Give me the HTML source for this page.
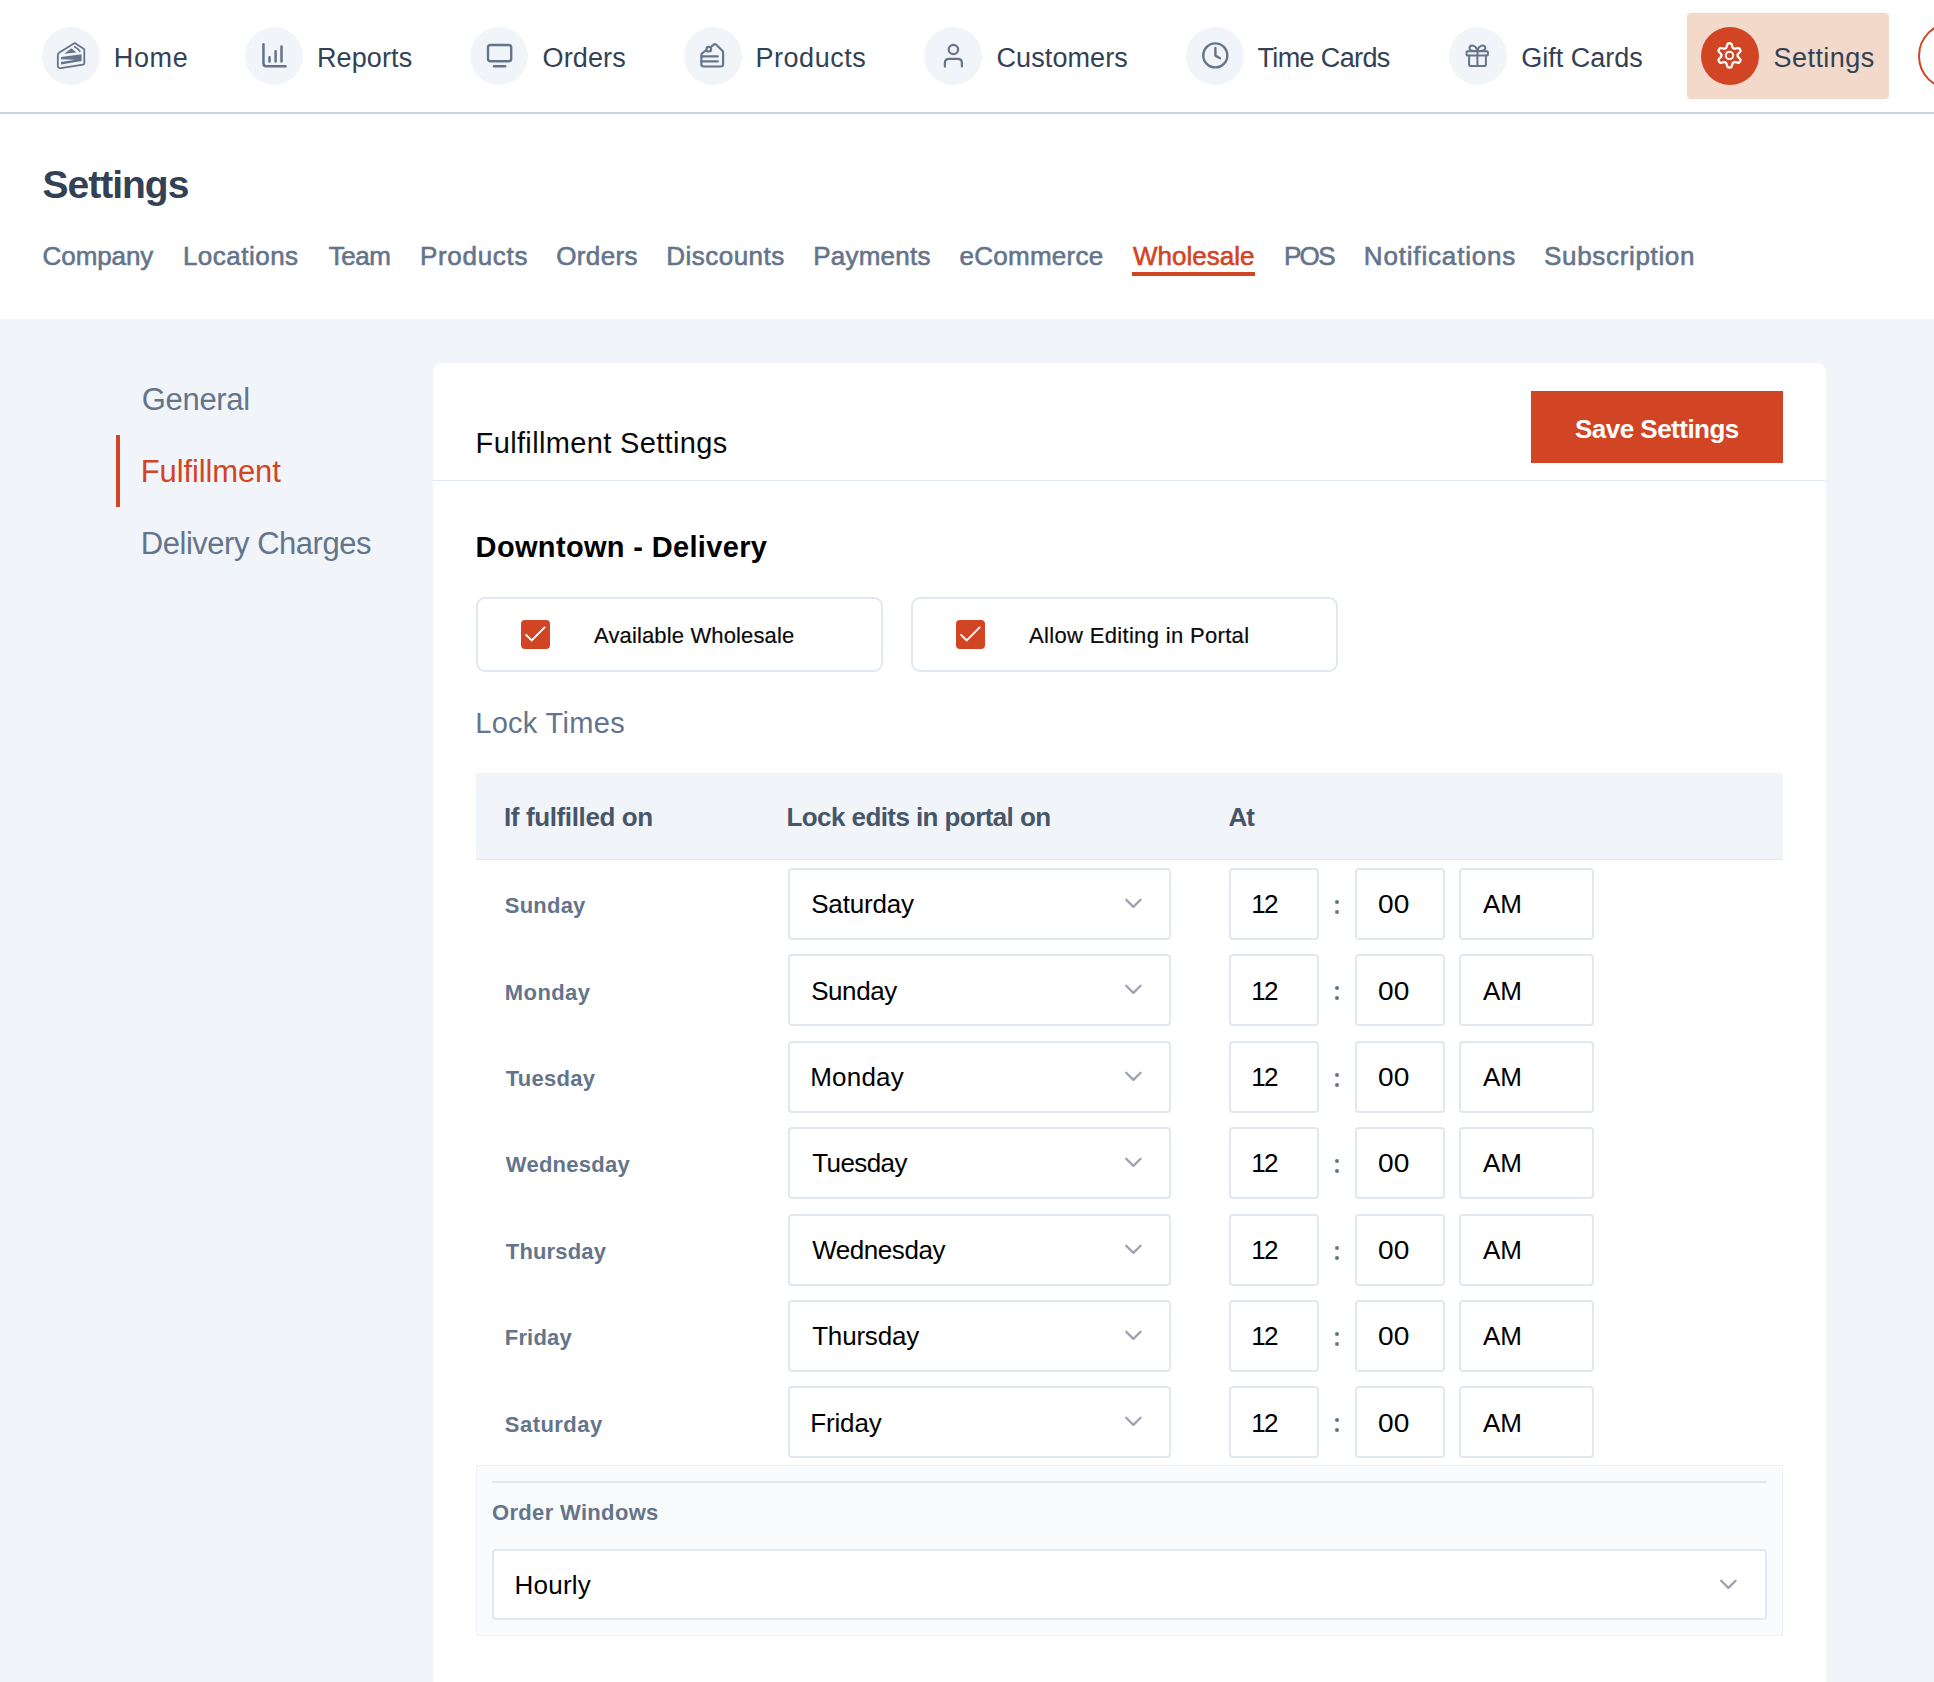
<!DOCTYPE html>
<html lang="en"><head><meta charset="utf-8"><title>Settings - Wholesale Fulfillment</title>
<style>
*{box-sizing:border-box;margin:0;padding:0}
html,body{width:1934px;height:1682px;overflow:hidden;background:#fff;font-family:"Liberation Sans", sans-serif}
.t{position:absolute;line-height:1;white-space:nowrap}
.abs{position:absolute}
.circ{position:absolute;width:58px;height:58px;border-radius:50%;background:#f1f5f9}
.circ svg{position:absolute;left:0;top:0}
.sel{position:absolute;background:#fff;border:2px solid #e2e8f0;border-radius:4px}
</style></head><body>
<nav class="topnav">
<div class="circ" style="left:42px;top:27px"><svg width="58" height="58" viewBox="0 0 58 58"><path d="M32.8 15.9 L42.3 22.2 V36.3 Q42.3 37.4 41.1 37.6 L18.8 41.1 Q15.8 41.5 15.8 38.6 V28.6 Q15.8 26.6 17.3 25.6 Z" stroke="#64748b" fill="none" stroke-linecap="round" stroke-linejoin="round" stroke-width="1.8"/><path d="M22.2 26.7 L29.4 21.3 L34.4 25.4 Z" fill="#64748b"/><path d="M32.6 19.8 Q35.8 21.2 37.9 24.3" stroke="#64748b" fill="none" stroke-linecap="round" stroke-linejoin="round" stroke-width="1.6"/><path d="M19 29.9 L39.6 27.2 L39.6 34 L19 37.6 L19 35.1 L33.2 32.7 L19 32.3 Z" fill="#64748b"/></svg></div>
<div class="t" style="left:113.80px;top:45px;font-size:27px;color:#334155;font-weight:normal;letter-spacing:0.63px;">Home</div>
<div class="circ" style="left:245px;top:27px"><svg width="58" height="58" viewBox="0 0 58 58"><path d="M18.45 17.2 V36.6 Q18.45 39.3 21.2 39.3 H40.6" stroke="#64748b" fill="none" stroke-linecap="round" stroke-linejoin="round" stroke-width="2.5"/><path d="M24.5 30.3 V34.6 M30.6 24.2 V34.6 M36.5 19.4 V34.6" stroke="#64748b" fill="none" stroke-linecap="round" stroke-linejoin="round" stroke-width="2.5"/></svg></div>
<div class="t" style="left:317.00px;top:45px;font-size:27px;color:#334155;font-weight:normal;letter-spacing:0.10px;">Reports</div>
<div class="circ" style="left:470px;top:27px"><svg width="58" height="58" viewBox="0 0 58 58"><rect x="18" y="18" width="23.2" height="16.3" rx="2.6" stroke="#64748b" fill="none" stroke-linecap="round" stroke-linejoin="round" stroke-width="2.4"/><path d="M24 39.3 H35.2" stroke="#64748b" fill="none" stroke-linecap="round" stroke-linejoin="round" stroke-width="2.4"/></svg></div>
<div class="t" style="left:542.50px;top:45px;font-size:27px;color:#334155;font-weight:normal;letter-spacing:0.14px;">Orders</div>
<div class="circ" style="left:684px;top:27px"><svg width="58" height="58" viewBox="0 0 58 58"><path d="M21.9 23.3 L17.9 26.5 Q17.4 27 17.4 27.8 V37.3 Q17.4 39.5 19.6 39.5 H37 Q39.1 39.5 39.1 37.3 V25.3 Q39.1 24.6 38.6 24 L32 17.5 Q31 16.6 30 17.4 L27.5 19.5" stroke="#64748b" fill="none" stroke-linecap="round" stroke-linejoin="round" stroke-width="2.2"/><circle cx="24.8" cy="22.2" r="2.3" stroke="#64748b" fill="none" stroke-linecap="round" stroke-linejoin="round" stroke-width="2.2"/><path d="M17.6 29.4 H33.8 M17.6 34.4 H33.8" stroke="#64748b" fill="none" stroke-linecap="round" stroke-linejoin="round" stroke-width="2.2"/></svg></div>
<div class="t" style="left:755.60px;top:45px;font-size:27px;color:#334155;font-weight:normal;letter-spacing:0.50px;">Products</div>
<div class="circ" style="left:924px;top:27px"><svg width="58" height="58" viewBox="0 0 58 58"><circle cx="29.4" cy="22.5" r="4.7" stroke="#64748b" fill="none" stroke-linecap="round" stroke-linejoin="round" stroke-width="2.2"/><path d="M20.9 39.6 V36 Q20.9 31.8 25.1 31.8 H33.7 Q37.9 31.8 37.9 36 V39.6" stroke="#64748b" fill="none" stroke-linecap="round" stroke-linejoin="round" stroke-width="2.2"/></svg></div>
<div class="t" style="left:996.50px;top:45px;font-size:27px;color:#334155;font-weight:normal;letter-spacing:0.09px;">Customers</div>
<div class="circ" style="left:1186px;top:27px"><svg width="58" height="58" viewBox="0 0 58 58"><circle cx="29.3" cy="28.4" r="12" stroke="#64748b" fill="none" stroke-linecap="round" stroke-linejoin="round" stroke-width="2.4"/><path d="M29.4 20.9 V28.6 L34 31.2" stroke="#64748b" fill="none" stroke-linecap="round" stroke-linejoin="round" stroke-width="2.4"/></svg></div>
<div class="t" style="left:1257.50px;top:45px;font-size:27px;color:#334155;font-weight:normal;letter-spacing:-0.63px;">Time Cards</div>
<div class="circ" style="left:1449px;top:27px"><svg width="58" height="58" viewBox="0 0 58 58"><rect x="17.6" y="24.3" width="21.3" height="4.3" rx="0.8" stroke="#64748b" fill="none" stroke-linecap="round" stroke-linejoin="round" stroke-width="2"/><path d="M20.1 28.6 V37.2 Q20.1 39 21.9 39 H35.1 Q36.9 39 36.9 37.2 V28.6 M28.4 22 V39" stroke="#64748b" fill="none" stroke-linecap="round" stroke-linejoin="round" stroke-width="2"/><path d="M28.4 23.6 Q27 19 23.6 18.4 Q20.6 18.2 20.4 21 Q20.5 23.4 23.5 23.8 Q26 24.2 28.4 23.6 Q30.8 24.2 33.3 23.8 Q36.3 23.4 36.4 21 Q36.2 18.2 33.2 18.4 Q29.8 19 28.4 23.6" stroke="#64748b" fill="none" stroke-linecap="round" stroke-linejoin="round" stroke-width="2"/></svg></div>
<div class="t" style="left:1521.30px;top:45px;font-size:27px;color:#334155;font-weight:normal;">Gift Cards</div>
<div class="abs" style="left:1687px;top:13px;width:202px;height:86px;background:#f3d9c9;border-radius:4px"></div>
<div class="circ" style="left:1701px;top:27px;background:#d14424"><svg width="58" height="58" viewBox="0 0 58 58"><path d="M36.60 28.40 L36.60 28.54 L36.60 28.68 L36.62 28.83 L36.64 28.97 L36.68 29.12 L36.74 29.27 L36.82 29.42 L36.92 29.58 L37.04 29.75 L37.18 29.93 L37.35 30.12 L37.53 30.32 L37.72 30.53 L37.93 30.75 L38.15 30.99 L38.38 31.23 L38.61 31.49 L38.83 31.76 L39.05 32.03 L39.25 32.31 L39.43 32.60 L39.53 32.86 L39.55 33.09 L39.51 33.30 L39.44 33.50 L39.36 33.70 L39.27 33.89 L39.18 34.08 L39.08 34.26 L38.97 34.45 L38.87 34.63 L38.76 34.81 L38.64 34.98 L38.52 35.16 L38.39 35.33 L38.25 35.48 L38.08 35.62 L37.88 35.73 L37.60 35.77 L37.27 35.76 L36.92 35.72 L36.57 35.67 L36.23 35.61 L35.89 35.54 L35.57 35.47 L35.25 35.39 L34.96 35.32 L34.68 35.26 L34.41 35.20 L34.17 35.15 L33.94 35.12 L33.73 35.10 L33.54 35.09 L33.37 35.10 L33.21 35.13 L33.06 35.17 L32.93 35.22 L32.80 35.28 L32.67 35.34 L32.55 35.41 L32.43 35.49 L32.31 35.56 L32.19 35.64 L32.08 35.74 L31.97 35.84 L31.87 35.97 L31.78 36.12 L31.69 36.28 L31.60 36.47 L31.52 36.69 L31.43 36.92 L31.35 37.18 L31.27 37.45 L31.18 37.75 L31.09 38.05 L30.99 38.37 L30.88 38.70 L30.76 39.02 L30.63 39.35 L30.49 39.67 L30.33 39.97 L30.16 40.18 L29.96 40.31 L29.76 40.38 L29.55 40.43 L29.34 40.46 L29.13 40.47 L28.92 40.49 L28.71 40.49 L28.50 40.49 L28.29 40.49 L28.08 40.49 L27.87 40.47 L27.66 40.46 L27.45 40.43 L27.24 40.38 L27.04 40.31 L26.84 40.18 L26.67 39.97 L26.51 39.67 L26.37 39.35 L26.24 39.02 L26.12 38.70 L26.01 38.37 L25.91 38.05 L25.82 37.75 L25.73 37.45 L25.65 37.18 L25.57 36.92 L25.48 36.69 L25.40 36.47 L25.31 36.28 L25.22 36.12 L25.13 35.97 L25.03 35.84 L24.92 35.74 L24.81 35.64 L24.69 35.56 L24.57 35.49 L24.45 35.41 L24.33 35.34 L24.20 35.28 L24.07 35.22 L23.94 35.17 L23.79 35.13 L23.63 35.10 L23.46 35.09 L23.27 35.10 L23.06 35.12 L22.83 35.15 L22.59 35.20 L22.32 35.26 L22.04 35.32 L21.75 35.39 L21.43 35.47 L21.11 35.54 L20.77 35.61 L20.43 35.67 L20.08 35.72 L19.73 35.76 L19.40 35.77 L19.12 35.73 L18.92 35.62 L18.75 35.48 L18.61 35.33 L18.48 35.16 L18.36 34.98 L18.24 34.81 L18.13 34.63 L18.03 34.45 L17.92 34.26 L17.82 34.08 L17.73 33.89 L17.64 33.70 L17.56 33.50 L17.49 33.30 L17.45 33.09 L17.47 32.86 L17.57 32.60 L17.75 32.31 L17.95 32.03 L18.17 31.76 L18.39 31.49 L18.62 31.23 L18.85 30.99 L19.07 30.75 L19.28 30.53 L19.47 30.32 L19.65 30.12 L19.82 29.93 L19.96 29.75 L20.08 29.58 L20.18 29.42 L20.26 29.27 L20.32 29.12 L20.36 28.97 L20.38 28.83 L20.40 28.68 L20.40 28.54 L20.40 28.40 L20.40 28.26 L20.40 28.12 L20.38 27.97 L20.36 27.83 L20.32 27.68 L20.26 27.53 L20.18 27.38 L20.08 27.22 L19.96 27.05 L19.82 26.87 L19.65 26.68 L19.47 26.48 L19.28 26.27 L19.07 26.05 L18.85 25.81 L18.62 25.57 L18.39 25.31 L18.17 25.04 L17.95 24.77 L17.75 24.49 L17.57 24.20 L17.47 23.94 L17.45 23.71 L17.49 23.50 L17.56 23.30 L17.64 23.10 L17.73 22.91 L17.82 22.72 L17.92 22.54 L18.03 22.35 L18.13 22.17 L18.24 21.99 L18.36 21.82 L18.48 21.64 L18.61 21.47 L18.75 21.32 L18.92 21.18 L19.12 21.07 L19.40 21.03 L19.73 21.04 L20.08 21.08 L20.43 21.13 L20.77 21.19 L21.11 21.26 L21.43 21.33 L21.75 21.41 L22.04 21.48 L22.32 21.54 L22.59 21.60 L22.83 21.65 L23.06 21.68 L23.27 21.70 L23.46 21.71 L23.63 21.70 L23.79 21.67 L23.94 21.63 L24.07 21.58 L24.20 21.52 L24.33 21.46 L24.45 21.39 L24.57 21.31 L24.69 21.24 L24.81 21.16 L24.92 21.06 L25.03 20.96 L25.13 20.83 L25.22 20.68 L25.31 20.52 L25.40 20.33 L25.48 20.11 L25.57 19.88 L25.65 19.62 L25.73 19.35 L25.82 19.05 L25.91 18.75 L26.01 18.43 L26.12 18.10 L26.24 17.78 L26.37 17.45 L26.51 17.13 L26.67 16.83 L26.84 16.62 L27.04 16.49 L27.24 16.42 L27.45 16.37 L27.66 16.34 L27.87 16.33 L28.08 16.31 L28.29 16.31 L28.50 16.31 L28.71 16.31 L28.92 16.31 L29.13 16.33 L29.34 16.34 L29.55 16.37 L29.76 16.42 L29.96 16.49 L30.16 16.62 L30.33 16.83 L30.49 17.13 L30.63 17.45 L30.76 17.78 L30.88 18.10 L30.99 18.43 L31.09 18.75 L31.18 19.05 L31.27 19.35 L31.35 19.62 L31.43 19.88 L31.52 20.11 L31.60 20.33 L31.69 20.52 L31.78 20.68 L31.87 20.83 L31.97 20.96 L32.08 21.06 L32.19 21.16 L32.31 21.24 L32.43 21.31 L32.55 21.39 L32.67 21.46 L32.80 21.52 L32.93 21.58 L33.06 21.63 L33.21 21.67 L33.37 21.70 L33.54 21.71 L33.73 21.70 L33.94 21.68 L34.17 21.65 L34.41 21.60 L34.68 21.54 L34.96 21.48 L35.25 21.41 L35.57 21.33 L35.89 21.26 L36.23 21.19 L36.57 21.13 L36.92 21.08 L37.27 21.04 L37.60 21.03 L37.88 21.07 L38.08 21.18 L38.25 21.32 L38.39 21.47 L38.52 21.64 L38.64 21.82 L38.76 21.99 L38.87 22.17 L38.97 22.35 L39.08 22.54 L39.18 22.72 L39.27 22.91 L39.36 23.10 L39.44 23.30 L39.51 23.50 L39.55 23.71 L39.53 23.94 L39.43 24.20 L39.25 24.49 L39.05 24.77 L38.83 25.04 L38.61 25.31 L38.38 25.57 L38.15 25.81 L37.93 26.05 L37.72 26.27 L37.53 26.48 L37.35 26.68 L37.18 26.87 L37.04 27.05 L36.92 27.22 L36.82 27.38 L36.74 27.53 L36.68 27.68 L36.64 27.83 L36.62 27.97 L36.60 28.12 L36.60 28.26 Z" fill="none" stroke="#fff" stroke-width="2.3" stroke-linejoin="round"/><circle cx="28.5" cy="28.4" r="3.7" fill="none" stroke="#fff" stroke-width="1.9"/></svg></div>
<div class="t" style="left:1773.50px;top:45px;font-size:27px;color:#334155;font-weight:normal;letter-spacing:0.46px;">Settings</div>
<div class="abs" style="left:1918px;top:21.5px;width:68px;height:68px;border-radius:50%;border:2px solid #d14424"></div>
</nav>
<div class="abs" style="left:0;top:112px;width:1934px;height:2px;background:#cbd5e1"></div>
<div class="t" style="left:42.60px;top:165px;font-size:39px;color:#334155;font-weight:bold;letter-spacing:-1.01px;">Settings</div>
<div class="tabs">
<div class="t" style="left:42.60px;top:243px;font-size:26px;color:#64748b;font-weight:normal;letter-spacing:-0.10px;-webkit-text-stroke:0.6px currentColor;">Company</div>
<div class="t" style="left:182.90px;top:243px;font-size:26px;color:#64748b;font-weight:normal;letter-spacing:0.49px;-webkit-text-stroke:0.6px currentColor;">Locations</div>
<div class="t" style="left:328.80px;top:243px;font-size:26px;color:#64748b;font-weight:normal;letter-spacing:-0.47px;-webkit-text-stroke:0.6px currentColor;">Team</div>
<div class="t" style="left:419.90px;top:243px;font-size:26px;color:#64748b;font-weight:normal;letter-spacing:0.71px;-webkit-text-stroke:0.6px currentColor;">Products</div>
<div class="t" style="left:556.20px;top:243px;font-size:26px;color:#64748b;font-weight:normal;letter-spacing:0.38px;-webkit-text-stroke:0.6px currentColor;">Orders</div>
<div class="t" style="left:666.20px;top:243px;font-size:26px;color:#64748b;font-weight:normal;letter-spacing:0.49px;-webkit-text-stroke:0.6px currentColor;">Discounts</div>
<div class="t" style="left:813.20px;top:243px;font-size:26px;color:#64748b;font-weight:normal;letter-spacing:0.24px;-webkit-text-stroke:0.6px currentColor;">Payments</div>
<div class="t" style="left:959.60px;top:243px;font-size:26px;color:#64748b;font-weight:normal;letter-spacing:0.24px;-webkit-text-stroke:0.6px currentColor;">eCommerce</div>
<div class="t" style="left:1133.00px;top:243px;font-size:26px;color:#d14424;font-weight:normal;-webkit-text-stroke:0.6px currentColor;">Wholesale</div>
<div class="t" style="left:1283.90px;top:243px;font-size:26px;color:#64748b;font-weight:normal;letter-spacing:-1.65px;-webkit-text-stroke:0.6px currentColor;">POS</div>
<div class="t" style="left:1363.80px;top:243px;font-size:26px;color:#64748b;font-weight:normal;letter-spacing:0.83px;-webkit-text-stroke:0.6px currentColor;">Notifications</div>
<div class="t" style="left:1544.10px;top:243px;font-size:26px;color:#64748b;font-weight:normal;letter-spacing:0.66px;-webkit-text-stroke:0.6px currentColor;">Subscription</div>
</div>
<div class="abs" style="left:1132px;top:272px;width:123px;height:4px;background:#d14424"></div>
<div class="abs" style="left:0;top:319px;width:1934px;height:1363px;background:#f1f5f9"></div>
<div class="t" style="left:141.80px;top:384px;font-size:31px;color:#64748b;font-weight:normal;letter-spacing:-0.32px;">General</div>
<div class="abs" style="left:116px;top:435px;width:4px;height:72px;background:#d14424"></div>
<div class="t" style="left:140.80px;top:456px;font-size:31px;color:#d14424;font-weight:normal;letter-spacing:-0.12px;">Fulfillment</div>
<div class="t" style="left:140.80px;top:528px;font-size:31px;color:#64748b;font-weight:normal;letter-spacing:-0.47px;">Delivery Charges</div>
<div class="abs" style="left:433px;top:363px;width:1393px;height:1400px;background:#fff;border-radius:9px"></div>
<div class="t" style="left:475.60px;top:429px;font-size:29px;color:#0a0a0a;font-weight:normal;letter-spacing:0.35px;">Fulfillment Settings</div>
<div class="abs" style="left:1531px;top:391px;width:252px;height:72px;background:#d14424"></div>
<div class="t" style="left:1575.00px;top:416px;font-size:26px;color:#ffffff;font-weight:bold;letter-spacing:-0.52px;">Save Settings</div>
<div class="abs" style="left:433px;top:480px;width:1393px;height:1px;background:#e2e8f0"></div>
<div class="t" style="left:475.60px;top:533px;font-size:29px;color:#000000;font-weight:bold;letter-spacing:0.34px;">Downtown - Delivery</div>
<div class="abs" style="left:476px;top:597px;width:407px;height:75px;border:2px solid #e2e8f0;border-radius:9px"></div>
<div class="abs" style="left:521px;top:620px;width:29px;height:29px;background:#d14424;border-radius:4px"><svg width="29" height="29" viewBox="0 0 29 29" style="position:absolute;left:0;top:0"><path d="M4.6 14.4 L10.7 20.5 L24.1 6.8" fill="none" stroke="#fff" stroke-width="1.9" stroke-linecap="butt" stroke-linejoin="miter"/></svg></div>
<div class="abs" style="left:911px;top:597px;width:427px;height:75px;border:2px solid #e2e8f0;border-radius:9px"></div>
<div class="abs" style="left:956px;top:620px;width:29px;height:29px;background:#d14424;border-radius:4px"><svg width="29" height="29" viewBox="0 0 29 29" style="position:absolute;left:0;top:0"><path d="M4.6 14.4 L10.7 20.5 L24.1 6.8" fill="none" stroke="#fff" stroke-width="1.9" stroke-linecap="butt" stroke-linejoin="miter"/></svg></div>
<div class="t" style="left:594.00px;top:625px;font-size:22px;color:#0a0a0a;font-weight:normal;letter-spacing:0.14px;-webkit-text-stroke:0.2px currentColor;">Available Wholesale</div>
<div class="t" style="left:1029.00px;top:625px;font-size:22px;color:#0a0a0a;font-weight:normal;letter-spacing:0.33px;-webkit-text-stroke:0.2px currentColor;">Allow Editing in Portal</div>
<div class="t" style="left:475.20px;top:709px;font-size:29px;color:#64748b;font-weight:normal;letter-spacing:0.31px;">Lock Times</div>
<div class="abs" style="left:476px;top:773px;width:1307px;height:86px;background:#f1f5f9"></div>
<div class="abs" style="left:476px;top:859px;width:1307px;height:1px;background:#e2e8f0"></div>
<div class="t" style="left:504.00px;top:804px;font-size:26px;color:#475569;font-weight:bold;letter-spacing:-0.38px;">If fulfilled on</div>
<div class="t" style="left:786.50px;top:804px;font-size:26px;color:#475569;font-weight:bold;letter-spacing:-0.58px;">Lock edits in portal on</div>
<div class="t" style="left:1228.60px;top:804px;font-size:26px;color:#475569;font-weight:bold;letter-spacing:-1.20px;">At</div>
<div class="sel" style="left:788px;top:868px;width:383px;height:72px"></div>
<svg class="abs" style="left:1123px;top:897.0px" width="20" height="12" viewBox="0 0 20 12"><path d="M3.2 2.7 L10.4 9.9 L17.6 2.7" fill="none" stroke="#9ca3af" stroke-width="2.3" stroke-linecap="round" stroke-linejoin="round"/></svg><div class="sel" style="left:1229px;top:868px;width:90px;height:72px"></div>
<div class="abs" style="left:1335px;top:900px;width:4px;height:4px;border-radius:50%;background:#64748b"></div>
<div class="abs" style="left:1335px;top:910px;width:4px;height:4px;border-radius:50%;background:#64748b"></div>
<div class="sel" style="left:1355px;top:868px;width:90px;height:72px"></div>
<div class="sel" style="left:1459px;top:868px;width:135px;height:72px"></div>
<div class="t" style="left:504.80px;top:895px;font-size:22px;color:#64748b;font-weight:bold;letter-spacing:0.22px;">Sunday</div>
<div class="t" style="left:811.20px;top:891px;font-size:26px;color:#000000;font-weight:normal;letter-spacing:-0.17px;">Saturday</div>
<div class="t" style="left:1251.30px;top:891px;font-size:26px;color:#000000;font-weight:normal;letter-spacing:-1.80px;">12</div>
<div class="t" style="left:1378.22px;top:891px;font-size:26px;color:#000000;font-weight:normal;transform:scaleX(1.081);transform-origin:0 0;">00</div>
<div class="t" style="left:1483.00px;top:891px;font-size:26px;color:#000000;font-weight:normal;letter-spacing:-0.10px;">AM</div>
<div class="sel" style="left:788px;top:954px;width:383px;height:72px"></div>
<svg class="abs" style="left:1123px;top:983.0px" width="20" height="12" viewBox="0 0 20 12"><path d="M3.2 2.7 L10.4 9.9 L17.6 2.7" fill="none" stroke="#9ca3af" stroke-width="2.3" stroke-linecap="round" stroke-linejoin="round"/></svg><div class="sel" style="left:1229px;top:954px;width:90px;height:72px"></div>
<div class="abs" style="left:1335px;top:986px;width:4px;height:4px;border-radius:50%;background:#64748b"></div>
<div class="abs" style="left:1335px;top:996px;width:4px;height:4px;border-radius:50%;background:#64748b"></div>
<div class="sel" style="left:1355px;top:954px;width:90px;height:72px"></div>
<div class="sel" style="left:1459px;top:954px;width:135px;height:72px"></div>
<div class="t" style="left:504.80px;top:982px;font-size:22px;color:#64748b;font-weight:bold;letter-spacing:0.42px;">Monday</div>
<div class="t" style="left:811.20px;top:978px;font-size:26px;color:#000000;font-weight:normal;letter-spacing:-0.44px;">Sunday</div>
<div class="t" style="left:1251.30px;top:978px;font-size:26px;color:#000000;font-weight:normal;letter-spacing:-1.80px;">12</div>
<div class="t" style="left:1378.22px;top:978px;font-size:26px;color:#000000;font-weight:normal;transform:scaleX(1.081);transform-origin:0 0;">00</div>
<div class="t" style="left:1483.00px;top:978px;font-size:26px;color:#000000;font-weight:normal;letter-spacing:-0.10px;">AM</div>
<div class="sel" style="left:788px;top:1041px;width:383px;height:72px"></div>
<svg class="abs" style="left:1123px;top:1070.0px" width="20" height="12" viewBox="0 0 20 12"><path d="M3.2 2.7 L10.4 9.9 L17.6 2.7" fill="none" stroke="#9ca3af" stroke-width="2.3" stroke-linecap="round" stroke-linejoin="round"/></svg><div class="sel" style="left:1229px;top:1041px;width:90px;height:72px"></div>
<div class="abs" style="left:1335px;top:1073px;width:4px;height:4px;border-radius:50%;background:#64748b"></div>
<div class="abs" style="left:1335px;top:1083px;width:4px;height:4px;border-radius:50%;background:#64748b"></div>
<div class="sel" style="left:1355px;top:1041px;width:90px;height:72px"></div>
<div class="sel" style="left:1459px;top:1041px;width:135px;height:72px"></div>
<div class="t" style="left:505.80px;top:1068px;font-size:22px;color:#64748b;font-weight:bold;letter-spacing:0.27px;">Tuesday</div>
<div class="t" style="left:810.20px;top:1064px;font-size:26px;color:#000000;font-weight:normal;letter-spacing:0.22px;">Monday</div>
<div class="t" style="left:1251.30px;top:1064px;font-size:26px;color:#000000;font-weight:normal;letter-spacing:-1.80px;">12</div>
<div class="t" style="left:1378.22px;top:1064px;font-size:26px;color:#000000;font-weight:normal;transform:scaleX(1.081);transform-origin:0 0;">00</div>
<div class="t" style="left:1483.00px;top:1064px;font-size:26px;color:#000000;font-weight:normal;letter-spacing:-0.10px;">AM</div>
<div class="sel" style="left:788px;top:1127px;width:383px;height:72px"></div>
<svg class="abs" style="left:1123px;top:1156.0px" width="20" height="12" viewBox="0 0 20 12"><path d="M3.2 2.7 L10.4 9.9 L17.6 2.7" fill="none" stroke="#9ca3af" stroke-width="2.3" stroke-linecap="round" stroke-linejoin="round"/></svg><div class="sel" style="left:1229px;top:1127px;width:90px;height:72px"></div>
<div class="abs" style="left:1335px;top:1159px;width:4px;height:4px;border-radius:50%;background:#64748b"></div>
<div class="abs" style="left:1335px;top:1169px;width:4px;height:4px;border-radius:50%;background:#64748b"></div>
<div class="sel" style="left:1355px;top:1127px;width:90px;height:72px"></div>
<div class="sel" style="left:1459px;top:1127px;width:135px;height:72px"></div>
<div class="t" style="left:505.80px;top:1154px;font-size:22px;color:#64748b;font-weight:bold;letter-spacing:0.25px;">Wednesday</div>
<div class="t" style="left:812.20px;top:1150px;font-size:26px;color:#000000;font-weight:normal;letter-spacing:-0.58px;">Tuesday</div>
<div class="t" style="left:1251.30px;top:1150px;font-size:26px;color:#000000;font-weight:normal;letter-spacing:-1.80px;">12</div>
<div class="t" style="left:1378.22px;top:1150px;font-size:26px;color:#000000;font-weight:normal;transform:scaleX(1.081);transform-origin:0 0;">00</div>
<div class="t" style="left:1483.00px;top:1150px;font-size:26px;color:#000000;font-weight:normal;letter-spacing:-0.10px;">AM</div>
<div class="sel" style="left:788px;top:1214px;width:383px;height:72px"></div>
<svg class="abs" style="left:1123px;top:1243.0px" width="20" height="12" viewBox="0 0 20 12"><path d="M3.2 2.7 L10.4 9.9 L17.6 2.7" fill="none" stroke="#9ca3af" stroke-width="2.3" stroke-linecap="round" stroke-linejoin="round"/></svg><div class="sel" style="left:1229px;top:1214px;width:90px;height:72px"></div>
<div class="abs" style="left:1335px;top:1246px;width:4px;height:4px;border-radius:50%;background:#64748b"></div>
<div class="abs" style="left:1335px;top:1256px;width:4px;height:4px;border-radius:50%;background:#64748b"></div>
<div class="sel" style="left:1355px;top:1214px;width:90px;height:72px"></div>
<div class="sel" style="left:1459px;top:1214px;width:135px;height:72px"></div>
<div class="t" style="left:505.80px;top:1241px;font-size:22px;color:#64748b;font-weight:bold;letter-spacing:0.17px;">Thursday</div>
<div class="t" style="left:812.20px;top:1237px;font-size:26px;color:#000000;font-weight:normal;letter-spacing:-0.45px;">Wednesday</div>
<div class="t" style="left:1251.30px;top:1237px;font-size:26px;color:#000000;font-weight:normal;letter-spacing:-1.80px;">12</div>
<div class="t" style="left:1378.22px;top:1237px;font-size:26px;color:#000000;font-weight:normal;transform:scaleX(1.081);transform-origin:0 0;">00</div>
<div class="t" style="left:1483.00px;top:1237px;font-size:26px;color:#000000;font-weight:normal;letter-spacing:-0.10px;">AM</div>
<div class="sel" style="left:788px;top:1300px;width:383px;height:72px"></div>
<svg class="abs" style="left:1123px;top:1329.0px" width="20" height="12" viewBox="0 0 20 12"><path d="M3.2 2.7 L10.4 9.9 L17.6 2.7" fill="none" stroke="#9ca3af" stroke-width="2.3" stroke-linecap="round" stroke-linejoin="round"/></svg><div class="sel" style="left:1229px;top:1300px;width:90px;height:72px"></div>
<div class="abs" style="left:1335px;top:1332px;width:4px;height:4px;border-radius:50%;background:#64748b"></div>
<div class="abs" style="left:1335px;top:1342px;width:4px;height:4px;border-radius:50%;background:#64748b"></div>
<div class="sel" style="left:1355px;top:1300px;width:90px;height:72px"></div>
<div class="sel" style="left:1459px;top:1300px;width:135px;height:72px"></div>
<div class="t" style="left:504.80px;top:1327px;font-size:22px;color:#64748b;font-weight:bold;letter-spacing:0.16px;">Friday</div>
<div class="t" style="left:812.20px;top:1323px;font-size:26px;color:#000000;font-weight:normal;letter-spacing:-0.20px;">Thursday</div>
<div class="t" style="left:1251.30px;top:1323px;font-size:26px;color:#000000;font-weight:normal;letter-spacing:-1.80px;">12</div>
<div class="t" style="left:1378.22px;top:1323px;font-size:26px;color:#000000;font-weight:normal;transform:scaleX(1.081);transform-origin:0 0;">00</div>
<div class="t" style="left:1483.00px;top:1323px;font-size:26px;color:#000000;font-weight:normal;letter-spacing:-0.10px;">AM</div>
<div class="sel" style="left:788px;top:1386px;width:383px;height:72px"></div>
<svg class="abs" style="left:1123px;top:1415.0px" width="20" height="12" viewBox="0 0 20 12"><path d="M3.2 2.7 L10.4 9.9 L17.6 2.7" fill="none" stroke="#9ca3af" stroke-width="2.3" stroke-linecap="round" stroke-linejoin="round"/></svg><div class="sel" style="left:1229px;top:1386px;width:90px;height:72px"></div>
<div class="abs" style="left:1335px;top:1418px;width:4px;height:4px;border-radius:50%;background:#64748b"></div>
<div class="abs" style="left:1335px;top:1428px;width:4px;height:4px;border-radius:50%;background:#64748b"></div>
<div class="sel" style="left:1355px;top:1386px;width:90px;height:72px"></div>
<div class="sel" style="left:1459px;top:1386px;width:135px;height:72px"></div>
<div class="t" style="left:504.80px;top:1414px;font-size:22px;color:#64748b;font-weight:bold;letter-spacing:0.46px;">Saturday</div>
<div class="t" style="left:810.20px;top:1410px;font-size:26px;color:#000000;font-weight:normal;letter-spacing:-0.14px;">Friday</div>
<div class="t" style="left:1251.30px;top:1410px;font-size:26px;color:#000000;font-weight:normal;letter-spacing:-1.80px;">12</div>
<div class="t" style="left:1378.22px;top:1410px;font-size:26px;color:#000000;font-weight:normal;transform:scaleX(1.081);transform-origin:0 0;">00</div>
<div class="t" style="left:1483.00px;top:1410px;font-size:26px;color:#000000;font-weight:normal;letter-spacing:-0.10px;">AM</div>
<div class="abs" style="left:476px;top:1465px;width:1307px;height:171px;background:#f8fafc;border:1px solid #eef2f6"></div>
<div class="abs" style="left:492px;top:1481px;width:1275px;height:2px;background:#e2e8f0"></div>
<div class="t" style="left:492.00px;top:1502px;font-size:22px;color:#64748b;font-weight:bold;letter-spacing:0.33px;">Order Windows</div>
<div class="sel" style="left:492px;top:1549px;width:1275px;height:71px"></div>
<div class="t" style="left:514.60px;top:1572px;font-size:26px;color:#000000;font-weight:normal;letter-spacing:0.22px;">Hourly</div>
<svg class="abs" style="left:1718px;top:1578.1px" width="20" height="12" viewBox="0 0 20 12"><path d="M3.2 2.7 L10.4 9.9 L17.6 2.7" fill="none" stroke="#9ca3af" stroke-width="2.3" stroke-linecap="round" stroke-linejoin="round"/></svg></body></html>
